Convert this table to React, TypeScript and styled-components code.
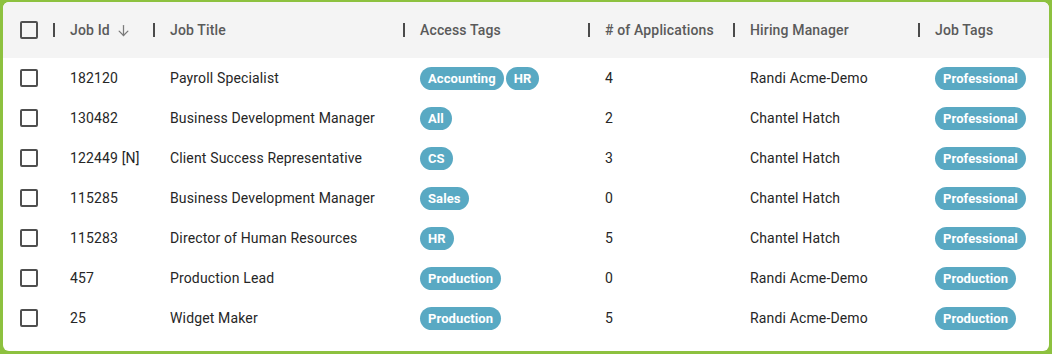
import React from "react";
import styled, { createGlobalStyle } from "styled-components";

const Global = createGlobalStyle`
  html, body { margin: 0; padding: 0; background: #8dc13f; }
  body { font-family: Roboto, "Noto Sans", Arial, sans-serif; }
  * { box-sizing: border-box; }
`;

const Frame = styled.div`
  width: 1052px;
  height: 354px;
  padding: 2px 3px 3px 3px;
  background: #8dc13f;
`;

const Card = styled.div`
  width: 100%;
  height: 100%;
  background: #ffffff;
  border-radius: 6px;
  overflow: hidden;
`;

const cols = "50px 100px 250px 185px 145px 185px 1fr";

const HeaderRow = styled.div`
  display: grid;
  grid-template-columns: ${cols};
  height: 56px;
  background: #f4f4f4;
  align-items: center;
`;

const Row = styled.div`
  display: grid;
  grid-template-columns: ${cols};
  height: 40px;
  align-items: center;
`;

const CheckCell = styled.div`
  display: flex;
  align-items: center;
  padding-left: 17px;
`;

const Checkbox = styled.span`
  display: inline-block;
  width: 18px;
  height: 18px;
  border: 2px solid #4f4f4f;
  border-radius: 2px;
`;

const HeadCell = styled.div`
  display: flex;
  align-items: center;
  font-size: 14px;
  font-weight: 500;
  letter-spacing: 0.15px;
  color: #5a5a5a;
  white-space: nowrap;
`;

const Sep = styled.span`
  display: inline-block;
  width: 2px;
  height: 14px;
  background: #4a4a4a;
  margin-right: 15px;
`;

const SortIcon = styled.svg`
  margin-left: 6px;
`;

const Cell = styled.div`
  display: flex;
  align-items: center;
  gap: 2px;
  padding-left: 17px;
  font-size: 14px;
  letter-spacing: 0.15px;
  color: #262626;
  white-space: nowrap;
`;

const Pill = styled.span`
  display: inline-flex;
  align-items: center;
  height: 23px;
  padding: 0 8px;
  border-radius: 12px;
  background: #59a9c3;
  color: #ffffff;
  font-size: 13px;
  font-weight: 700;
  letter-spacing: 0.1px;
`;

type Job = {
  id: string;
  title: string;
  access: string[];
  apps: number;
  manager: string;
  tags: string[];
};

const jobs: Job[] = [
  { id: "182120", title: "Payroll Specialist", access: ["Accounting", "HR"], apps: 4, manager: "Randi Acme-Demo", tags: ["Professional"] },
  { id: "130482", title: "Business Development Manager", access: ["All"], apps: 2, manager: "Chantel Hatch", tags: ["Professional"] },
  { id: "122449 [N]", title: "Client Success Representative", access: ["CS"], apps: 3, manager: "Chantel Hatch", tags: ["Professional"] },
  { id: "115285", title: "Business Development Manager", access: ["Sales"], apps: 0, manager: "Chantel Hatch", tags: ["Professional"] },
  { id: "115283", title: "Director of Human Resources", access: ["HR"], apps: 5, manager: "Chantel Hatch", tags: ["Professional"] },
  { id: "457", title: "Production Lead", access: ["Production"], apps: 0, manager: "Randi Acme-Demo", tags: ["Production"] },
  { id: "25", title: "Widget Maker", access: ["Production"], apps: 5, manager: "Randi Acme-Demo", tags: ["Production"] },
];

const headers = ["Job Id", "Job Title", "Access Tags", "# of Applications", "Hiring Manager", "Job Tags"];

export default function App() {
  return (
    <>
      <Global />
      <Frame>
        <Card>
          <HeaderRow>
            <CheckCell>
              <Checkbox />
            </CheckCell>
            {headers.map((h) => (
              <HeadCell key={h}>
                <Sep />
                {h}
                {h === "Job Id" && (
                  <SortIcon width="15" height="15" viewBox="0 0 24 24" fill="none" stroke="#7a7a7a" strokeWidth="2" strokeLinecap="round" strokeLinejoin="round">
                    <path d="M12 4v16" />
                    <path d="M5 13l7 7 7-7" />
                  </SortIcon>
                )}
              </HeadCell>
            ))}
          </HeaderRow>
          {jobs.map((j) => (
            <Row key={j.id}>
              <CheckCell>
                <Checkbox />
              </CheckCell>
              <Cell>{j.id}</Cell>
              <Cell>{j.title}</Cell>
              <Cell>
                {j.access.map((a) => (
                  <Pill key={a}>{a}</Pill>
                ))}
              </Cell>
              <Cell>{j.apps}</Cell>
              <Cell>{j.manager}</Cell>
              <Cell>
                {j.tags.map((t) => (
                  <Pill key={t}>{t}</Pill>
                ))}
              </Cell>
            </Row>
          ))}
        </Card>
      </Frame>
    </>
  );
}
